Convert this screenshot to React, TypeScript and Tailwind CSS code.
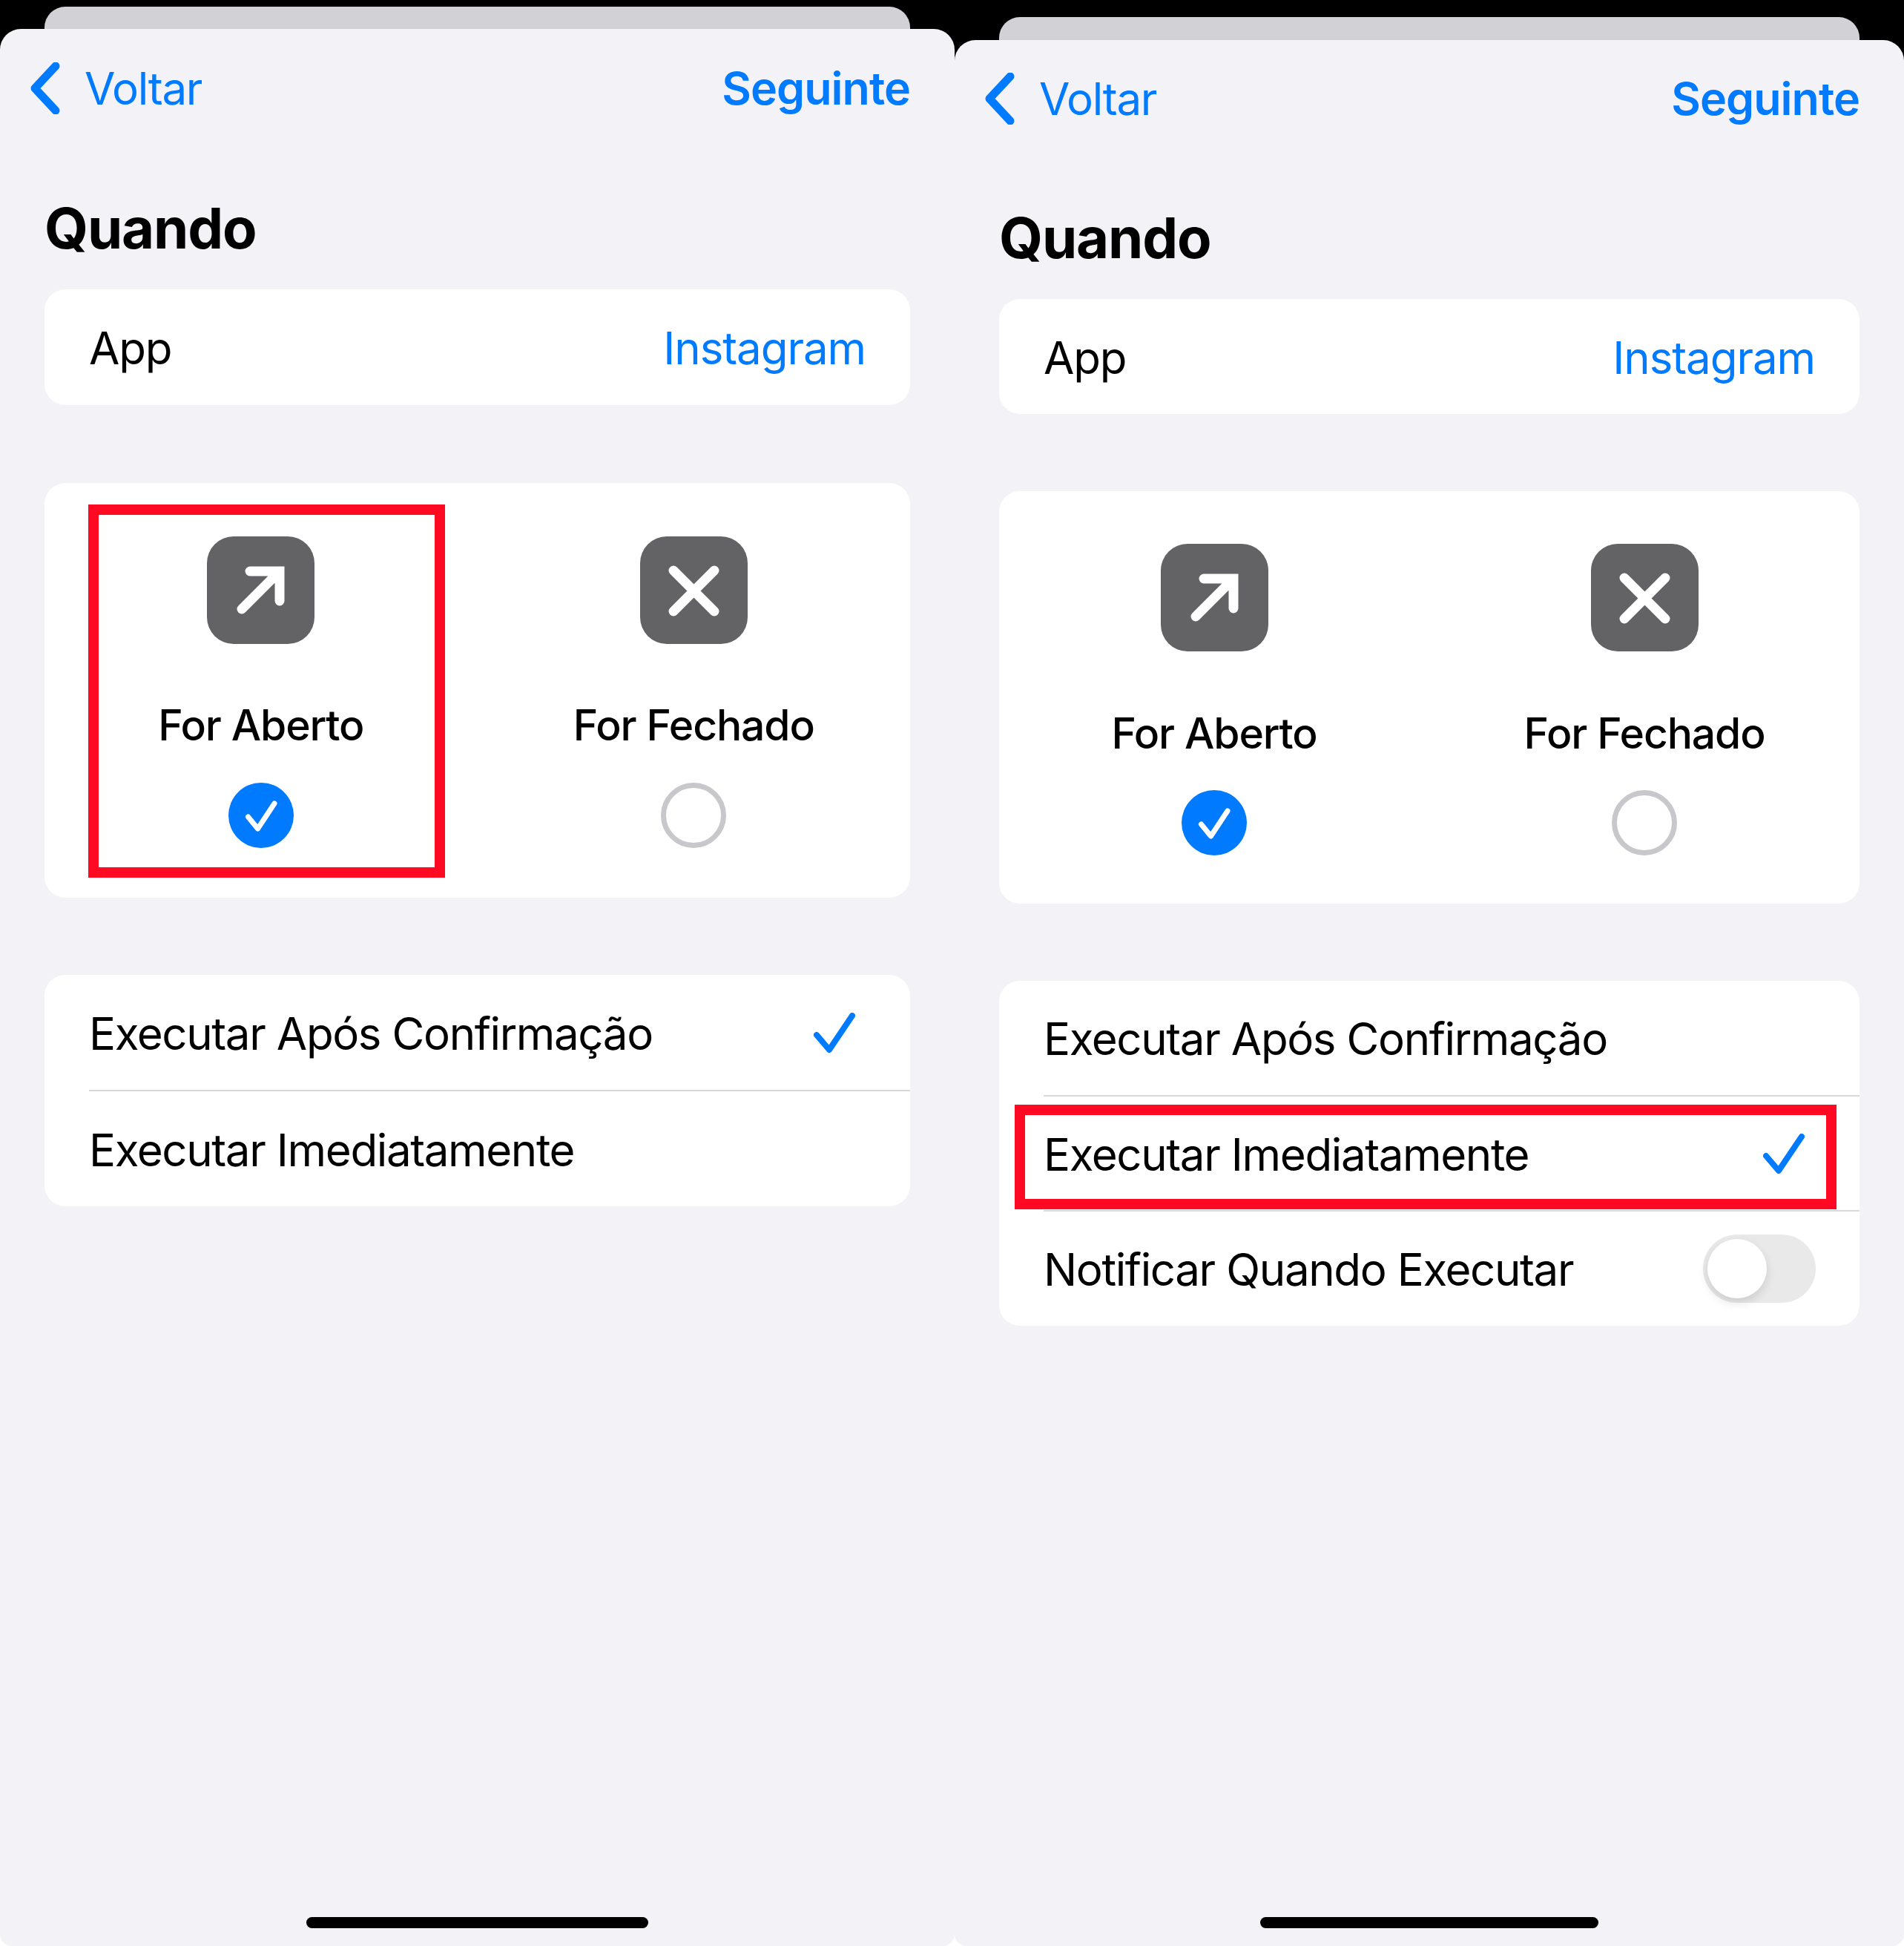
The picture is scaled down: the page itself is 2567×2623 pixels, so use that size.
import type { ReactNode } from 'react'

const BLUE = '#007aff'

function NavBar({ top }: { top: string }) {
	return (
		<div className={`flex items-center justify-between h-[80px] pl-[41px] pr-[60px] ${top}`}>
			<div className="flex items-center">
				<svg width="40" height="70" viewBox="0 0 40 70" fill="none">
					<path d="M34 5 L6 35 L34 65" stroke={BLUE} strokeWidth="11" strokeLinecap="round" strokeLinejoin="round" />
				</svg>
				<span className="ml-[33px] text-[60px] leading-[80px] tracking-[-0.022em] text-[#007aff]">Voltar</span>
			</div>
			<span className="text-[61px] leading-[80px] font-semibold tracking-[-0.016em] text-[#007aff]">Seguinte</span>
		</div>
	)
}

function Title({ top }: { top: string }) {
	return <h1 className={`mb-[38px] px-[60px] text-[76px] leading-[90px] font-bold tracking-[-0.015em] text-black ${top}`}>Quando</h1>
}

function AppRow({ height }: { height: string }) {
	return (
		<div className={`mx-[60px] flex items-center justify-between rounded-[28px] bg-white px-[60px] pt-[2px] ${height}`}>
			<span className="text-[60px] tracking-[-0.02em] text-black">App</span>
			<span className="text-[60px] tracking-[-0.018em] text-[#007aff]">Instagram</span>
		</div>
	)
}

function OpenIcon() {
	return (
		<svg width="145" height="145" viewBox="0 0 145 145" fill="none" className="rounded-[36px] bg-[#636366]">
			<path d="M58 47 H98 V87 M47 98 L98 47" stroke="#fff" strokeWidth="13" strokeLinecap="round" />
		</svg>
	)
}

function CloseIcon() {
	return (
		<svg width="145" height="145" viewBox="0 0 145 145" fill="none" className="rounded-[36px] bg-[#636366]">
			<path d="M45 46 L100 101 M100 46 L45 101" stroke="#fff" strokeWidth="13" strokeLinecap="round" />
		</svg>
	)
}

function Option({ icon, label, checked, dense }: { icon: ReactNode; label: string; checked?: boolean; dense?: boolean }) {
	return (
		<div className={`flex flex-1 flex-col items-center ${dense ? 'pt-[71px]' : 'pt-[72px]'}`}>
			{icon}
			<span className={`text-[57px] leading-[70px] font-medium tracking-[-0.02em] text-black ${dense ? 'mt-[76px]' : 'mt-[75px]'}`}>{label}</span>
			{checked ? (
				<svg width="88" height="88" viewBox="0 0 88 88" fill="none" className={dense ? 'mt-[41px]' : 'mt-[42px]'}>
					<circle cx="44" cy="44" r="44" fill={BLUE} />
					<path d="M26.5 46 L39.5 62 L62 28" stroke="#fff" strokeWidth="7" strokeLinecap="round" strokeLinejoin="round" />
				</svg>
			) : (
				<div className={`h-[88px] w-[88px] rounded-full border-[7px] border-[#c7c7cc] ${dense ? 'mt-[41px]' : 'mt-[42px]'}`} />
			)}
		</div>
	)
}

function Check() {
	return (
		<svg width="56" height="54" viewBox="0 0 56 54" fill="none">
			<path d="M4 30 L21 50 L52 4" stroke={BLUE} strokeWidth="8" strokeLinecap="round" strokeLinejoin="round" />
		</svg>
	)
}

function Row({ label, height, children }: { label: string; height: string; children?: ReactNode }) {
	return (
		<div className={`flex items-center justify-between pl-[60px] ${height}`}>
			<span className="pt-[2px] text-[60px] tracking-[-0.023em] text-black">{label}</span>
			{children}
		</div>
	)
}

function Divider() {
	return <div className="ml-[60px] h-[2px] bg-[#d8d8da]" />
}

function HomeBar({ width }: { width: string }) {
	return <div className={`mt-auto mb-[24px] mx-auto h-[15px] rounded-full bg-black ${width}`} />
}

export default function App() {
	return (
		<div className="flex h-[2623px] w-[2567px] overflow-hidden bg-[linear-gradient(to_bottom,#000_50%,#fff_50%)] [font-family:Inter,sans-serif]">
			{/* left phone */}
			<div className="flex w-[1287px] flex-col">
				<div className="mx-[60px] mt-[9px] h-[30px] shrink-0 rounded-t-[28px] bg-[#d1d1d6]" />
				<div className="flex flex-1 flex-col rounded-t-[28px] rounded-b-[16px] bg-[#f2f2f7]">
					<NavBar top="mt-[40px]" />
					<Title top="mt-[103px]" />
					<AppRow height="h-[156px]" />
					<div className="relative mx-[60px] mt-[105px] flex h-[559px] rounded-[28px] bg-white">
						<Option icon={<OpenIcon />} label="For Aberto" checked />
						<Option icon={<CloseIcon />} label="For Fechado" />
						<div className="absolute top-[29px] left-[59px] h-[503px] w-[481px] border-[14px] border-[#ff0a22]" />
					</div>
					<div className="mx-[60px] mt-[104px] rounded-[28px] bg-white">
						<Row label="Executar Após Confirmação" height="h-[155px] pr-[74px]">
							<Check />
						</Row>
						<Divider />
						<Row label="Executar Imediatamente" height="h-[155px]" />
					</div>
					<HomeBar width="w-[461px]" />
				</div>
			</div>
			{/* right phone */}
			<div className="flex w-[1280px] flex-col">
				<div className="mx-[60px] mt-[23px] h-[31px] shrink-0 rounded-t-[28px] bg-[#d1d1d6]" />
				<div className="flex flex-1 flex-col rounded-t-[28px] rounded-b-[16px] bg-[#f2f2f7]">
					<NavBar top="mt-[39px]" />
					<Title top="mt-[102px]" />
					<AppRow height="h-[155px]" />
					<div className="mx-[60px] mt-[104px] flex h-[556px] rounded-[28px] bg-white">
						<Option icon={<OpenIcon />} label="For Aberto" checked dense />
						<Option icon={<CloseIcon />} label="For Fechado" dense />
					</div>
					<div className="relative mx-[60px] mt-[104px] rounded-[28px] bg-white">
						<Row label="Executar Após Confirmação" height="h-[154px]" />
						<Divider />
						<Row label="Executar Imediatamente" height="h-[153px] pr-[74px]">
							<Check />
						</Row>
						<Divider />
						<Row label="Notificar Quando Executar" height="h-[154px] pr-[59px]">
							<div className="flex h-[92px] w-[152px] items-center rounded-full bg-[#e9e9ea] pl-[6px]">
								<div className="h-[80px] w-[80px] rounded-full bg-white shadow-[0_6px_14px_rgba(0,0,0,0.12)]" />
							</div>
						</Row>
						<div className="absolute top-[167px] left-[21px] h-[141px] w-[1108px] border-[14px] border-[#ff0a22]" />
					</div>
					<HomeBar width="w-[456px]" />
				</div>
			</div>
		</div>
	)
}
